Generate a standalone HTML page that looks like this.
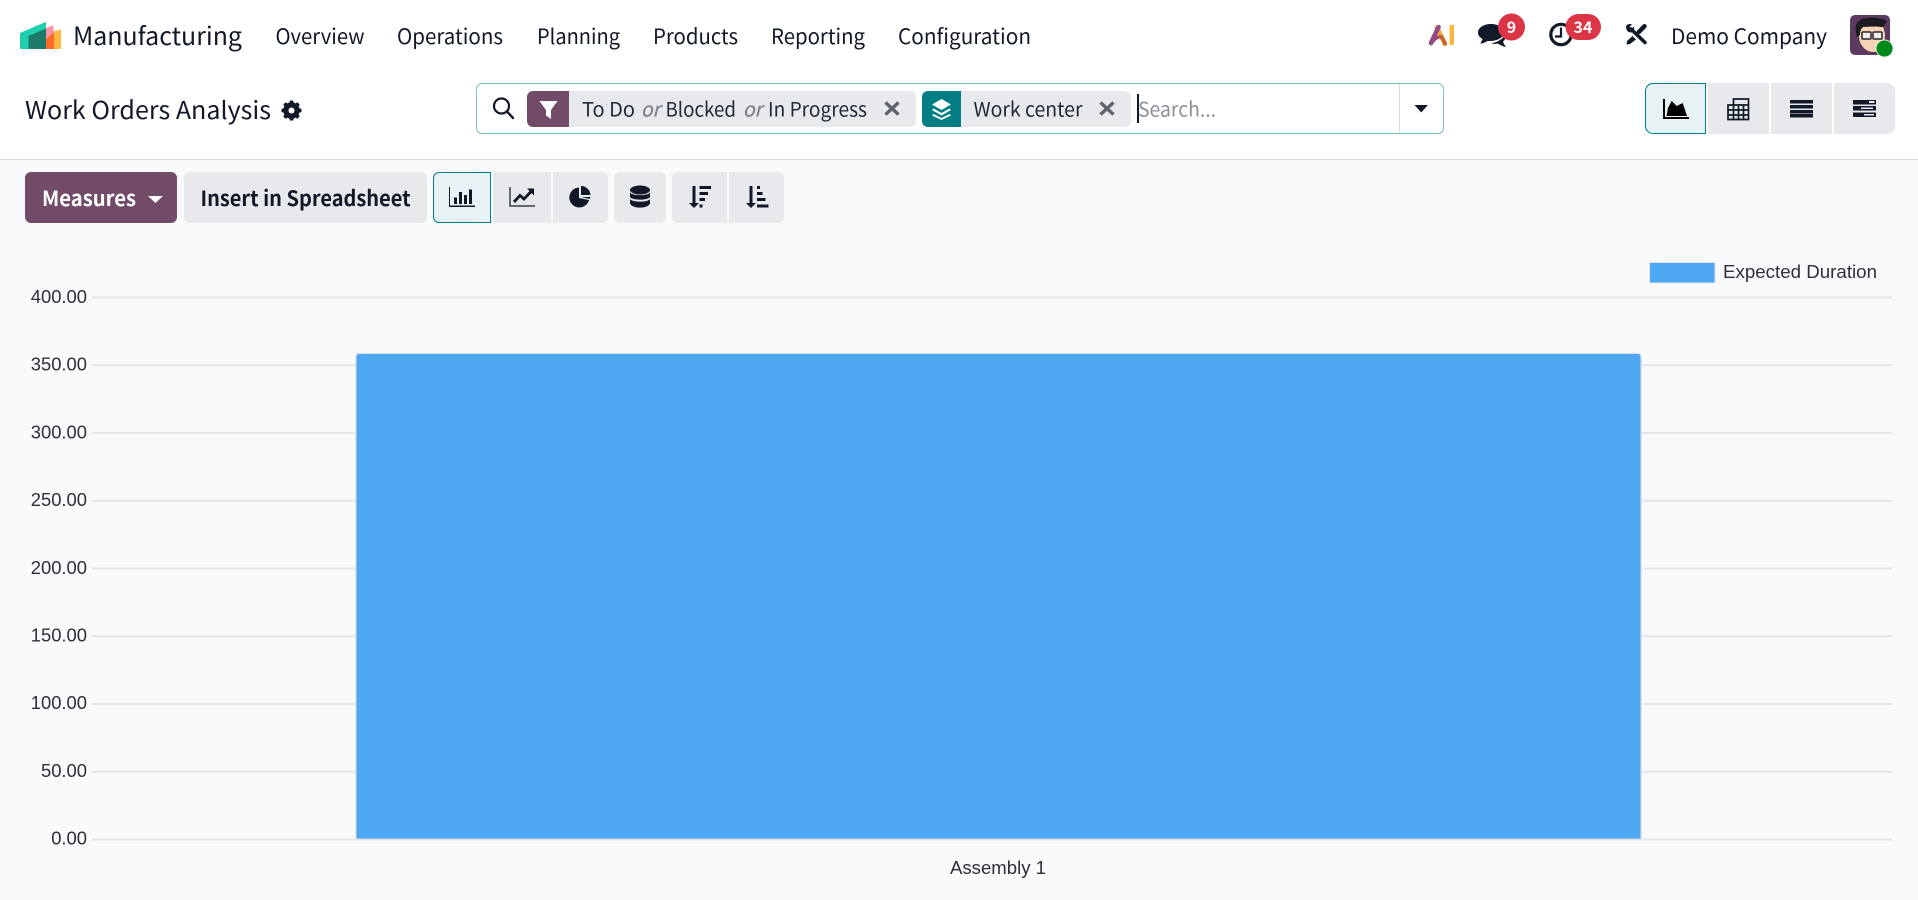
<!DOCTYPE html>
<html lang="en">
<head>
<meta charset="utf-8">
<title>Work Orders Analysis</title>
<style>
html,body{margin:0;padding:0;width:1918px;height:900px;overflow:hidden;background:#f9fafb}
.abs,.abs *{position:absolute;box-sizing:border-box}
#head{left:0;top:0;width:1918px;height:160px;background:#fff;border-bottom:1px solid #d8dadd}
.b{background:#e7e9ed;top:172px;height:51px;border-radius:6px}
.v{background:#e7e9ed;top:83px;height:51px}
.act{background:#e6f2f3;border:1px solid #017e84}
svg{position:absolute;left:0;top:0}
text{font-family:"Noto Sans CJK SC","Liberation Sans",sans-serif;fill:#111827;font-size:20px}
.c{font-family:"Liberation Sans",Arial,sans-serif;fill:#2b303a;font-size:18.4px}
.g{font-size:20px;fill:#1f2937}
.o{font-size:20px;font-style:italic;fill:#7f838b;stroke:#7f838b;stroke-width:.3px}
</style>
</head>
<body>
<div class="abs" style="left:0;top:0;width:1918px;height:900px">
  <div id="head"></div>
  <!-- search -->
  <div style="left:476px;top:83px;width:968px;height:51px;border:1px solid #7fbfc1;border-radius:6px;background:#fff"></div>
  <div style="left:1399px;top:84px;width:1px;height:49px;background:#d8dadd"></div>
  <div style="left:527px;top:91px;width:389px;height:36px;background:#e7e9ed;border-radius:6px"></div>
  <div style="left:527px;top:91px;width:42px;height:36px;background:#714b67;border-radius:6px 0 0 6px"></div>
  <div style="left:922px;top:91px;width:209px;height:36px;background:#e7e9ed;border-radius:6px"></div>
  <div style="left:922px;top:91px;width:39px;height:36px;background:#017e84;border-radius:6px 0 0 6px"></div>
  <div style="left:1137px;top:94px;width:1.5px;height:29px;background:#111827"></div>
  <!-- view switcher -->
  <div class="v act" style="left:1645px;width:61px;border-radius:8px 0 0 8px"></div>
  <div class="v" style="left:1708px;width:61px"></div>
  <div class="v" style="left:1771px;width:61px"></div>
  <div class="v" style="left:1834px;width:61px;border-radius:0 8px 8px 0"></div>
  <!-- toolbar -->
  <div class="b" style="left:25px;width:152px;background:#714b67"></div>
  <div class="b" style="left:184px;width:243px"></div>
  <div class="b act" style="left:433px;width:58px;border-radius:6px 0 0 6px"></div>
  <div class="b" style="left:493px;width:58px;border-radius:0"></div>
  <div class="b" style="left:553px;width:55px;border-radius:0 6px 6px 0"></div>
  <div class="b" style="left:614px;width:52px"></div>
  <div class="b" style="left:672px;width:55px;border-radius:6px 0 0 6px"></div>
  <div class="b" style="left:729px;width:55px;border-radius:0 6px 6px 0"></div>
</div>

<svg width="1918" height="900" viewBox="0 0 1918 900" xmlns="http://www.w3.org/2000/svg">
  <!-- logo -->
  <path d="M20 33L45.500 22Q46 22 46 23V49H21Q20 49 20 48Z" fill="#1fcfae"/>
  <path d="M46 28L53 25.500L54 32L46 39Z" fill="#fb93a6"/>
  <path d="M46 39L54 32V49H46Z" fill="#fb6a2a"/>
  <path d="M54 31.500L61 29.500V47Q61 49 59 49H54Z" fill="#fdb63f"/>
  <path d="M28.500 36L46 28.500V49H28.500Z" fill="#1c7a6a"/>

  <!-- top nav -->
  <text x="73" y="45" style="font-size:25px" textLength="169" lengthAdjust="spacingAndGlyphs">Manufacturing</text>
  <text x="275.500" y="44" style="font-size:21px" textLength="89" lengthAdjust="spacingAndGlyphs">Overview</text>
  <text x="397" y="44" style="font-size:21px" textLength="106" lengthAdjust="spacingAndGlyphs">Operations</text>
  <text x="537" y="44" style="font-size:21px" textLength="83" lengthAdjust="spacingAndGlyphs">Planning</text>
  <text x="653" y="44" style="font-size:21px" textLength="85" lengthAdjust="spacingAndGlyphs">Products</text>
  <text x="771" y="44" style="font-size:21px" textLength="94" lengthAdjust="spacingAndGlyphs">Reporting</text>
  <text x="898" y="44" style="font-size:21px" textLength="133" lengthAdjust="spacingAndGlyphs">Configuration</text>
  <text x="1671" y="44" style="font-size:21px" textLength="156" lengthAdjust="spacingAndGlyphs">Demo Company</text>

  <!-- AI -->
  <path d="M1437 27.500L1445 44" fill="none" stroke="#f6ab3c" stroke-width="4.600" stroke-linecap="round"/>
  <path d="M1431 43L1438.500 27" fill="none" stroke="#954a83" stroke-width="4.600" stroke-linecap="round"/>
  <path d="M1431 43.500Q1437 35.500 1441.500 37" fill="none" stroke="#954a83" stroke-width="3.600" stroke-linecap="round"/>
  <path d="M1440 36.500Q1443 38 1445 43.500" fill="none" stroke="#c6622f" stroke-width="3.600" stroke-linecap="round"/>
  <rect x="1449.500" y="25" width="4.500" height="20" rx="1" fill="#fdb63f"/>

  <!-- chat icon -->
  <path d="M1491 24C1484 24 1478 27.500 1478 32.500C1478 35.500 1480 37.500 1482.500 39C1482 41 1481 42.500 1480 43.500C1483 43.500 1486 42 1487.500 41C1496 41.500 1504 38 1504 32.500C1504 27.500 1498 24 1491 24Z" fill="#111827"/>
  <path d="M1506 34C1507 37 1505 40 1503 41.500C1503.500 43.500 1505 45.500 1506 47C1503 46.500 1500 45 1498 43.500C1496 44 1493 44 1491 43.500C1497 42.500 1503 39 1506 34Z" fill="#111827"/>
  <circle cx="1511.500" cy="27" r="13.500" fill="#dc3545"/>
  <text x="1511.500" y="33" text-anchor="middle" style="font-size:16px;font-weight:700;fill:#fff">9</text>

  <!-- clock icon -->
  <circle cx="1561" cy="34.500" r="10.200" fill="none" stroke="#111827" stroke-width="3.200"/>
  <path d="M1561 27.500V36.500H1555" fill="none" stroke="#111827" stroke-width="2.200"/>
  <rect x="1565.500" y="14" width="35.500" height="26" rx="13" fill="#dc3545"/>
  <text x="1583" y="33" text-anchor="middle" style="font-size:16px;font-weight:700;fill:#fff">34</text>

  <!-- tools icon -->
  <path d="M1631 29L1645 42.500" fill="none" stroke="#111827" stroke-width="3.600" stroke-linecap="round"/>
  <path d="M1626 27.500Q1626 24 1630 24L1632 24.200L1629.500 27L1631.500 29L1634 26.500Q1635 31 1631.500 32.500Q1626.500 32.500 1626 27.500Z" fill="#111827"/>
  <path d="M1644.500 26.200L1639 31.800" fill="none" stroke="#111827" stroke-width="4.400" stroke-linecap="round"/>
  <path d="M1632.500 36L1636 39.500L1630 44L1626.500 44.500L1627 41Z" fill="#111827"/>

  <!-- avatar -->
  <rect x="1850" y="15" width="40" height="40" rx="5" fill="#5c3a5f"/>
  <path d="M1859 36C1859 44 1865 52 1873 52C1881 52 1885 44 1885 34L1883 26H1861Z" fill="#f6d3b3"/>
  <path d="M1856 32C1854 24 1859 18 1868 18C1874 17 1882 18 1887 21C1885 24 1884 28 1881 27C1875 26 1868 27 1863 27C1861 29 1860 31 1860 35L1857 37Z" fill="#1a1a20"/>
  <rect x="1862" y="32" width="9" height="7" rx="1" fill="#eee" stroke="#25252b" stroke-width="1.500"/>
  <rect x="1873" y="32" width="9" height="7" rx="1" fill="#eee" stroke="#25252b" stroke-width="1.500"/>
  <circle cx="1884.500" cy="48.500" r="8.500" fill="#008a1c" stroke="#fff" stroke-width="0.800"/>

  <!-- title -->
  <text x="25" y="119" style="font-size:24.500px" textLength="246" lengthAdjust="spacingAndGlyphs">Work Orders Analysis</text>
  <g fill="#111827" transform="translate(291.500 110.500)">
    <circle r="6" fill="none" stroke="#111827" stroke-width="4.500"/>
    <rect x="-1.900" y="-10" width="3.800" height="20" rx=".8"/>
    <rect x="-1.900" y="-10" width="3.800" height="20" rx=".8" transform="rotate(45)"/>
    <rect x="-1.900" y="-10" width="3.800" height="20" rx=".8" transform="rotate(90)"/>
    <rect x="-1.900" y="-10" width="3.800" height="20" rx=".8" transform="rotate(135)"/>
    <circle r="3" fill="#fff"/>
  </g>

  <!-- search glass -->
  <circle cx="501.500" cy="106" r="7.500" fill="none" stroke="#111827" stroke-width="2.200"/>
  <path d="M507 111.500L513 118" stroke="#111827" stroke-width="2.400" stroke-linecap="round"/>

  <!-- filter icon -->
  <path d="M539.500 101H557.500L551 110V119L546 115.500V110Z" fill="#fff"/>
  <!-- chip text -->
  <text class="g" x="582" y="116.500" textLength="53" lengthAdjust="spacingAndGlyphs">To Do</text>
  <text class="o" x="641" y="116.500" textLength="19" lengthAdjust="spacingAndGlyphs">or</text>
  <text class="g" x="665.500" y="116.500" textLength="70.500" lengthAdjust="spacingAndGlyphs">Blocked</text>
  <text class="o" x="743" y="116.500" textLength="19" lengthAdjust="spacingAndGlyphs">or</text>
  <text class="g" x="768" y="116.500" textLength="99" lengthAdjust="spacingAndGlyphs">In Progress</text>
  <path d="M885.500 102.500L898.500 114.500M898.500 102.500L885.500 114.500" stroke="#5f636c" stroke-width="3.400"/>

  <!-- layers icon -->
  <path d="M941.500 99L951 104.500L941.500 110L932 104.500Z" fill="#fff"/>
  <path d="M933.500 108.500L932 110L941.500 115.500L951 110L949.500 108.500L941.500 113Z" fill="#fff"/>
  <path d="M933.500 114L932 115.500L941.500 120L951 115.500L949.500 114L941.500 118Z" fill="#fff"/>
  <text class="g" x="973.500" y="116.500" textLength="109" lengthAdjust="spacingAndGlyphs">Work center</text>
  <path d="M1100.500 102.500L1113.500 114.500M1113.500 102.500L1100.500 114.500" stroke="#5f636c" stroke-width="3.400"/>

  <text x="1138" y="116.500" textLength="78" lengthAdjust="spacingAndGlyphs" style="font-size:20px;fill:#8a8f98">Search...</text>
  <path d="M1414.500 105H1428L1421.250 112.500Z" fill="#111827"/>

  <!-- view icons -->
  <path d="M1664 99V118H1689" fill="none" stroke="#000" stroke-width="2"/>
  <path d="M1666.500 116L1668 108L1671.700 101L1676.700 106L1682.700 103L1687 116Z" fill="#000"/>
  <g fill="none" stroke="#111827" stroke-width="1.700">
    <path d="M1733.500 105V99H1748.500V119.500H1728V105H1748.500M1728 110H1748.500M1728 115H1748.500M1733.500 105V119.500M1738.500 105V119.500M1743.500 105V119.500"/>
  </g>
  <g fill="#111827">
    <rect x="1790" y="100" width="23" height="3.500"/><rect x="1790" y="105" width="23" height="3.500"/><rect x="1790" y="110" width="23" height="3.500"/><rect x="1790" y="114" width="23" height="3.500"/>
    <rect x="1853" y="100" width="23" height="4.500"/><rect x="1853" y="106" width="23" height="4.500"/><rect x="1853" y="112.500" width="23" height="4.500"/>
  </g>
  <rect x="1869" y="101" width="5.500" height="2" fill="#e7e9ed"/>
  <rect x="1861" y="107.500" width="12" height="1.500" fill="#e7e9ed"/>
  <rect x="1864" y="114" width="10" height="1.500" fill="#e7e9ed"/>

  <!-- toolbar text -->
  <text x="42" y="206" textLength="94" lengthAdjust="spacingAndGlyphs" style="font-size:21px;font-weight:700;fill:#fff">Measures</text>
  <path d="M148 196H163L155.500 203Z" fill="#fff"/>
  <text x="200.500" y="206" textLength="210" lengthAdjust="spacingAndGlyphs" style="font-size:21px;font-weight:700">Insert in Spreadsheet</text>

  <!-- toolbar icons -->
  <g fill="#111827">
    <path d="M450 187V205.500H475V207H449V187Z"/>
    <rect x="454" y="197.500" width="3" height="6.500"/><rect x="459" y="192" width="3" height="12"/><rect x="464" y="195" width="3" height="9"/><rect x="469" y="189.500" width="3" height="14.500"/>
  </g>
  <path d="M510 187V206H535" fill="none" stroke="#374151" stroke-width="1.500"/>
  <path d="M514 202L520 195.500L524 199L531.500 191" fill="none" stroke="#111827" stroke-width="2.800"/>
  <path d="M527 188.500H534V195.500Z" fill="#111827"/>
  <path d="M579 187.500A10 10 0 1 0 589 200L579 198Z" fill="#111827"/>
  <path d="M581 186A9.500 9.500 0 0 1 590.500 195H581Z" fill="#111827"/>
  <path d="M581.500 197H590.500A10 10 0 0 1 589.500 199Z" fill="#111827"/>
  <g fill="#111827">
    <ellipse cx="640" cy="190" rx="10" ry="4.500"/>
    <path d="M630 192.500C632 196 648 196 650 192.500V197C648 200.500 632 200.500 630 197Z"/>
    <path d="M630 199C632 202.500 648 202.500 650 199V203.500C648 209 632 209 630 203.500Z"/>
    <!-- sort desc -->
    <path d="M692.500 186H695.500V203H699L694 208L689 203H692.500Z"/>
    <rect x="699.500" y="186" width="11.500" height="3"/><rect x="699.500" y="192" width="8.500" height="3"/><rect x="699.500" y="198" width="5.500" height="3"/><rect x="699.500" y="204.500" width="3" height="3"/>
    <!-- sort asc -->
    <path d="M749.500 186H752.500V203H756L751 208L746 203H749.500Z"/>
    <rect x="757" y="186" width="3" height="3"/><rect x="757" y="192" width="5.500" height="3"/><rect x="757" y="198" width="8.500" height="3"/><rect x="757" y="204.500" width="11.500" height="3"/>
  </g>

  <!-- chart -->
  <rect x="1649.500" y="262.500" width="65.500" height="20.500" fill="#4ea7f2" stroke="#e2e6ea" stroke-width="1"/>
  <text class="c" x="1723" y="278" textLength="154" lengthAdjust="spacingAndGlyphs" style="font-size:18px">Expected Duration</text>
  <g stroke="#e4e6ea" stroke-width="2">
    <path d="M92 297.500H1892"/><path d="M92 365.300H1892"/><path d="M92 433H1892"/><path d="M92 500.800H1892"/><path d="M92 568.500H1892"/><path d="M92 636.300H1892"/><path d="M92 704H1892"/><path d="M92 771.800H1892"/><path d="M92 839.500H1892"/>
  </g>
  <path d="M356 839V357Q356 353.500 359 353.500H1638Q1641 353.500 1641 357V839Z" fill="#4ea7f2" stroke="#d8dde2" stroke-width="1"/>
  <g text-anchor="end">
    <text class="c" x="87" y="303">400.00</text>
    <text class="c" x="87" y="370.500">350.00</text>
    <text class="c" x="87" y="438.500">300.00</text>
    <text class="c" x="87" y="506">250.00</text>
    <text class="c" x="87" y="574">200.00</text>
    <text class="c" x="87" y="641.500">150.00</text>
    <text class="c" x="87" y="709">100.00</text>
    <text class="c" x="87" y="777">50.00</text>
    <text class="c" x="87" y="844.500">0.00</text>
  </g>
  <text class="c" x="950" y="874" textLength="96" lengthAdjust="spacingAndGlyphs" style="font-size:18px">Assembly 1</text>
</svg>
</body>
</html>
